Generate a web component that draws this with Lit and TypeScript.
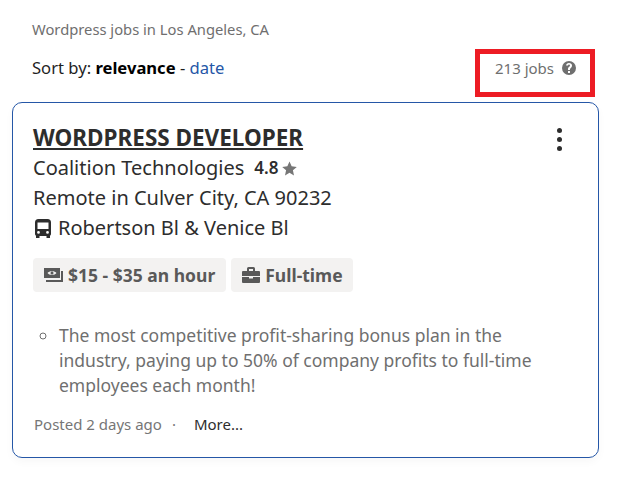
import { LitElement, html, css } from "lit";
import { customElement } from "lit/decorators.js";

@customElement("app-root")
export class AppRoot extends LitElement {
  static styles = css`
    :host { display: block; width: 623px; height: 484px; background: #fff; font-family: "Noto Sans", sans-serif; color: #2d2d2d; overflow: hidden; box-sizing: border-box; padding: 19px 24px 0 12px; }
    .crumb { margin-left: 20px; font-size: 14.75px; line-height: 20px; color: #6f6f6f; }
    .bar { display: flex; justify-content: space-between; align-items: flex-start; margin-top: 10px; height: 53px; margin-left: 20px; }
    .sort { font-size: 16.6px; line-height: 20px; color: #1f1f1f; margin-top: 9px; }
    .sort b { color: #000; }
    .sort a { color: #2557a7; }
    .count { box-sizing: border-box; width: 120px; height: 48px; border: 5px solid #ed1c24; display: flex; align-items: center; padding: 0 0 10px 15px; gap: 8px; font-size: 15px; color: #6f6f6f; margin-right: 4px; }
    .count svg { width: 14px; height: 14px; fill: #6f6f6f; }
    .card { box-sizing: border-box; width: 587px; height: 356px; border: 1px solid #2557a7; border-radius: 10px; padding: 20px 20px 0 20px; position: relative; box-shadow: 0 4px 8px rgba(0,0,0,.03); }
    .title { font-size: 22.5px; line-height: 30px; font-weight: 700; text-decoration: underline; color: #2d2d2d; }
    .line { font-size: 20px; line-height: 30px; color: #2d2d2d; display: flex; align-items: center; }
    .rate { font-size: 17px; font-weight: 600; margin-left: 10px; }
    .star { width: 15px; height: 15px; margin-left: 4px; fill: #767676; }
    .bus { width: 16px; height: 19px; margin: 0 7px 0 2px; fill: #2d2d2d; }
    .menu { position: absolute; top: 25px; right: 36px; display: flex; flex-direction: column; gap: 4px; }
    .menu i { display: block; width: 5px; height: 5px; border-radius: 50%; background: #2d2d2d; }
    .chips { display: flex; gap: 5px; margin-top: 15px; }
    .chip { display: flex; align-items: center; height: 34px; border-radius: 4px; background: #f3f2f1; padding: 0 10px; font-size: 17.5px; font-weight: 700; color: #595959; gap: 3px; }
    .chip.pay { padding-right: 11px; gap: 4px; }
    .chip svg { width: 21px; height: 18px; fill: #595959; }
    ul { margin: 31px 0 0 0; padding: 0 0 0 26px; font-size: 17.5px; line-height: 25px; color: #6f6f6f; list-style: circle; width: 490px; }
    .foot { display: flex; margin-top: 16px; margin-left: 1px; font-size: 15px; line-height: 20px; color: #767676; }
    .foot .dot { margin: 0 18px 0 10px; }
    .foot a { color: #2d2d2d; }
  `;

  render() {
    return html`
      <div class="crumb">Wordpress jobs in Los Angeles, CA</div>
      <div class="bar">
        <div class="sort">Sort by: <b>relevance</b> - <a>date</a></div>
        <div class="count">213 jobs
          <svg viewBox="0 0 14 14"><path fill-rule="evenodd" d="M7 0a7 7 0 1 1 0 14A7 7 0 0 1 7 0zM6 10v2h2v-2H6zm1-8C5.3 2 4.200 3 4.100 4.600h1.900c.1-.6.4-1 1-1s1 .3 1 .9c0 .5-.3.8-.8 1.200C6.400 6.300 6 6.900 6 8v1h2v-.7c0-.6.2-.9.8-1.400C9.500 6.300 10 5.600 10 4.500 10 3 8.800 2 7 2z"/></svg>
        </div>
      </div>
      <div class="card">
        <div class="title">WORDPRESS DEVELOPER</div>
        <div class="menu"><i></i><i></i><i></i></div>
        <div class="line">Coalition Technologies <span class="rate">4.8</span>
          <svg class="star" viewBox="0 0 14 14"><path d="M7 .5l2 4.500 4.800.5-3.600 3.200 1 4.800L7 11l-4.200 2.500 1-4.800L.2 5.500 5 5z"/></svg>
        </div>
        <div class="line">Remote in Culver City, CA 90232</div>
        <div class="line">
          <svg class="bus" viewBox="0 0 16 19"><path fill-rule="evenodd" d="M3.500 0h9A3.500 3.500 0 0 1 16 3.500V15a2 2 0 0 1-1 1.700V19h-3.500v-2h-7v2H1v-2.300A2 2 0 0 1 0 15V3.500A3.500 3.500 0 0 1 3.500 0zM2.500 3.500V10h11V3.500h-11zm1 8.500a1.400 1.400 0 1 0 0 2.800 1.400 1.400 0 0 0 0-2.800zm9 0a1.400 1.400 0 1 0 0 2.800 1.400 1.400 0 0 0 0-2.800z"/></svg>
          Robertson Bl &amp; Venice Bl
        </div>
        <div class="chips">
          <div class="chip pay">
            <svg viewBox="0 0 21 18"><path fill-rule="evenodd" d="M1 2h16v10H1V2zm3.500 5C6 9.500 12 9.500 13.500 7 12 4.500 6 4.500 4.500 7zM9 5.500a1.500 1.500 0 1 1 0 3 1.500 1.500 0 0 1 0-3zM18 5h2v11H3v-2h15V5z"/></svg>
            $15 - $35 an hour
          </div>
          <div class="chip">
            <svg viewBox="0 0 21 18"><path fill-rule="evenodd" d="M2 5h16a1 1 0 0 1 1 1v4H1V6a1 1 0 0 1 1-1zm4 0V2.500A1.500 1.500 0 0 1 7.500 1h5A1.500 1.500 0 0 1 14 2.500V5h-2V3H8v2H6zM1 11h7v1.500h4V11h7v5a1 1 0 0 1-1 1H2a1 1 0 0 1-1-1v-5z"/></svg>
            Full-time
          </div>
        </div>
        <ul><li>The most competitive profit-sharing bonus plan in the industry, paying up to 50% of company profits to full-time employees each month!</li></ul>
        <div class="foot">Posted 2 days ago<span class="dot">·</span><a>More...</a></div>
      </div>
    `;
  }
}
